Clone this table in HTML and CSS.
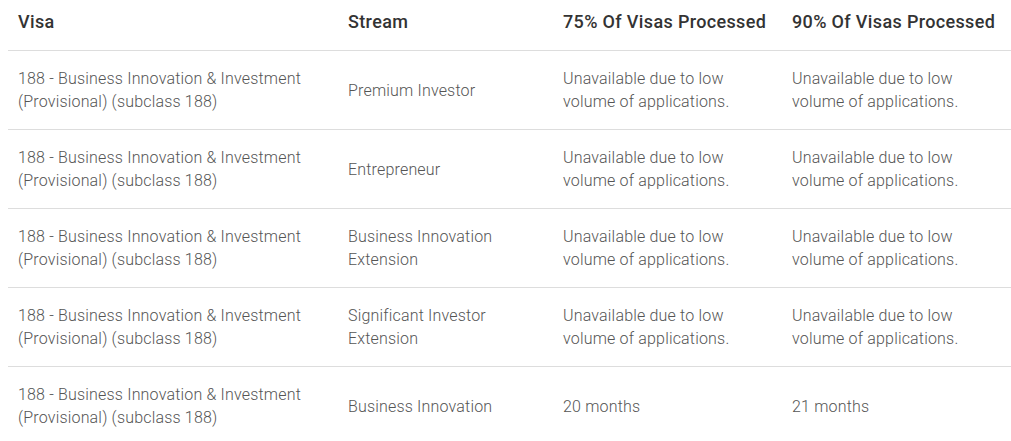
FILE: index.html
```html
<!DOCTYPE html>
<html lang="en">
<head>
<meta charset="utf-8">
<title>Visa processing times</title>
<link rel="stylesheet" href="styles.css">
</head>
<body>
<table class="times">
  <colgroup>
    <col class="c-visa">
    <col class="c-stream">
    <col class="c-p75">
    <col class="c-p90">
  </colgroup>
  <thead>
    <tr>
      <th>Visa</th>
      <th>Stream</th>
      <th>75% Of Visas Processed</th>
      <th>90% Of Visas Processed</th>
    </tr>
  </thead>
  <tbody>
    <tr>
      <td>188 - Business Innovation &amp; Investment (Provisional) (subclass 188)</td>
      <td>Premium Investor</td>
      <td>Unavailable due to low volume of applications.</td>
      <td>Unavailable due to low volume of applications.</td>
    </tr>
    <tr>
      <td>188 - Business Innovation &amp; Investment (Provisional) (subclass 188)</td>
      <td>Entrepreneur</td>
      <td>Unavailable due to low volume of applications.</td>
      <td>Unavailable due to low volume of applications.</td>
    </tr>
    <tr>
      <td>188 - Business Innovation &amp; Investment (Provisional) (subclass 188)</td>
      <td>Business Innovation Extension</td>
      <td>Unavailable due to low volume of applications.</td>
      <td>Unavailable due to low volume of applications.</td>
    </tr>
    <tr>
      <td>188 - Business Innovation &amp; Investment (Provisional) (subclass 188)</td>
      <td>Significant Investor Extension</td>
      <td>Unavailable due to low volume of applications.</td>
      <td>Unavailable due to low volume of applications.</td>
    </tr>
    <tr>
      <td>188 - Business Innovation &amp; Investment (Provisional) (subclass 188)</td>
      <td>Business Innovation</td>
      <td>20 months</td>
      <td>21 months</td>
    </tr>
  </tbody>
</table>
</body>
</html>
```
FILE: styles.css
```css
html, body {
  background: #ffffff;
}
body {
  margin: 0 0 0 8px;
  font-family: Roboto, "Liberation Sans", sans-serif;
  overflow: hidden;
}
.times {
  border-collapse: collapse;
  table-layout: fixed;
  width: 1003px;
}
.c-visa { width: 330px; }
.c-stream { width: 215px; }
.c-p75 { width: 229px; }
.c-p90 { width: 229px; }
.times th {
  text-align: left;
  font-weight: 500;
  font-size: 18px;
  line-height: 26px;
  letter-spacing: 0.35px;
  color: #333333;
  padding: 9px 10px 15px;
  border-bottom: 1px solid #dddddd;
  white-space: nowrap;
}
.times td {
  font-weight: 300;
  font-size: 16px;
  line-height: 23px;
  letter-spacing: 0.18px;
  color: #555555;
  padding: 16px 10px;
  vertical-align: middle;
  border-bottom: 1px solid #dddddd;
}
```
